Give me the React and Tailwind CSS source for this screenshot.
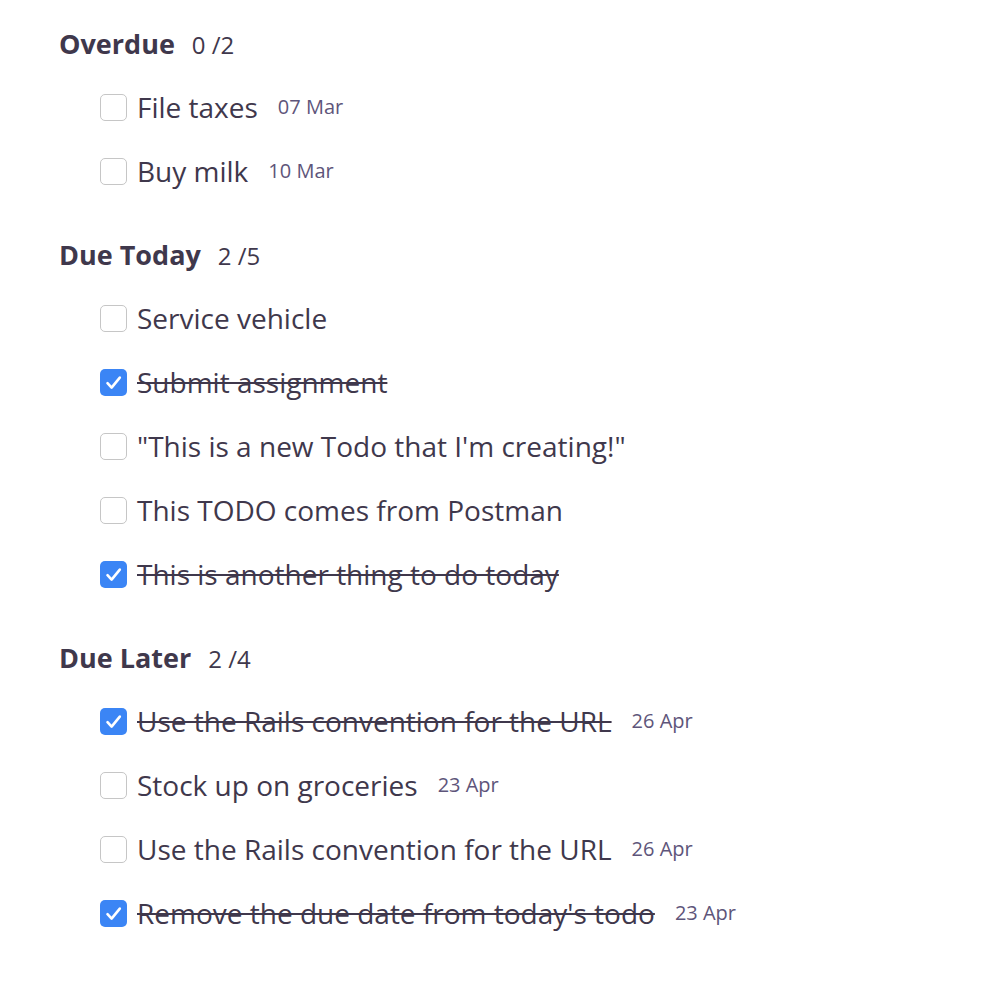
import React from "react";

const sections = [
  {
    title: "Overdue",
    count: "0 /2",
    items: [
      { text: "File taxes", date: "07 Mar", done: false },
      { text: "Buy milk", date: "10 Mar", done: false },
    ],
  },
  {
    title: "Due Today",
    count: "2 /5",
    items: [
      { text: "Service vehicle", done: false },
      { text: "Submit assignment", done: true },
      { text: "\"This is a new Todo that I'm creating!\"", done: false },
      { text: "This TODO comes from Postman", done: false },
      { text: "This is another thing to do today", done: true },
    ],
  },
  {
    title: "Due Later",
    count: "2 /4",
    items: [
      { text: "Use the Rails convention for the URL", date: "26 Apr", done: true },
      { text: "Stock up on groceries", date: "23 Apr", done: false },
      { text: "Use the Rails convention for the URL", date: "26 Apr", done: false },
      { text: "Remove the due date from today's todo", date: "23 Apr", done: true },
    ],
  },
];

function Box({ done }) {
  if (done) {
    return (
      <span className="flex h-[27px] w-[27px] shrink-0 items-center justify-center rounded-[5px] bg-[#3b85f5]">
        <svg width="27" height="27" viewBox="0 0 27 27" fill="none">
          <path d="M7.5 14.2 L11.6 18.6 L19.8 8.6" stroke="white" strokeWidth="2.6" strokeLinecap="round" strokeLinejoin="round" />
        </svg>
      </span>
    );
  }
  return <span className="h-[27px] w-[27px] shrink-0 rounded-[5px] border border-[#c6c6c6] bg-white" />;
}

export default function App() {
  return (
    <div className="min-h-[988px] w-[982px] bg-white pt-[15px] text-[#3f384c]" style={{ fontFamily: "'Open Sans', 'Noto Sans', sans-serif" }}>
      {sections.map((s, i) => (
        <section key={i} className="mb-[23px] pl-[59px]">
          <div className="flex h-[60px] items-center pb-[1px]">
            <h2 className="text-[27px] font-bold">{s.title}</h2>
            <span className="ml-[17px] text-[24px]">{s.count}</span>
          </div>
          <ul className="pl-[41px]">
            {s.items.map((it, j) => (
              <li key={j} className="flex h-[64px] items-center">
                <Box done={it.done} />
                <span className={"ml-[10px] text-[28px] " + (it.done ? "line-through decoration-[#3f384c]" : "")}>{it.text}</span>
                {it.date && <span className="ml-[20px] text-[20px] text-[#5e557a]">{it.date}</span>}
              </li>
            ))}
          </ul>
        </section>
      ))}
    </div>
  );
}
